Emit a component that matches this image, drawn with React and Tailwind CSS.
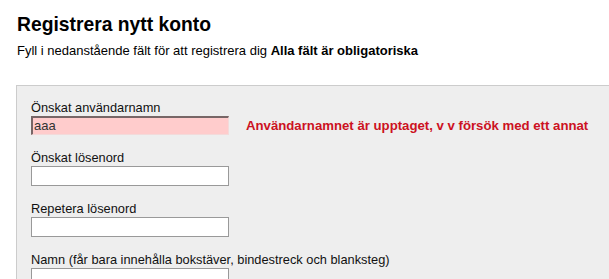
export default function App() {
  const font = { fontFamily: '"Liberation Sans", Arial, sans-serif' };
  return (
    <div className="min-h-[279px] bg-white pt-[13px] text-black overflow-hidden" style={font}>
      <div className="pl-[17px]">
        <h1 className="text-[19.3px] font-bold leading-[24px]">Registrera nytt konto</h1>
        <p className="text-[13px] leading-[16px] mt-[6px]">
          Fyll i nedanstående fält för att registrera dig <b>Alla fält är obligatoriska</b>
        </p>
      </div>
      <div className="ml-[16px] mt-[26px] border-t border-l border-[#cccccc] bg-[#eeeeee] pt-[14px] pl-[14px] pb-[20px]">
        <div className="mb-[15px]">
          <div className="text-[12.8px] leading-[16px] text-[#111]">Önskat användarnamn</div>
          <div className="flex items-center">
            <div className="w-[198px] h-[19px] bg-[#ffcccc] border-t-2 border-l-2 border-r border-b border-t-[#776666] border-l-[#776666] border-r-[#f3dada] border-b-[#f3dada] text-[13px] leading-[15px] text-[#333] pl-[1px]">aaa</div>
            <div className="ml-[17px] text-[13.2px] font-bold text-[#cc1122] leading-[16px] whitespace-nowrap">
              Användarnamnet är upptaget, v v försök med ett annat
            </div>
          </div>
        </div>
        <div className="mb-[15px]">
          <div className="text-[12.8px] leading-[16px] text-[#111]">Önskat lösenord</div>
          <div className="w-[198px] h-[20px] bg-white border border-[#999999]"></div>
        </div>
        <div className="mb-[15px]">
          <div className="text-[12.8px] leading-[16px] text-[#111]">Repetera lösenord</div>
          <div className="w-[198px] h-[20px] bg-white border border-[#999999]"></div>
        </div>
        <div className="mb-[15px]">
          <div className="text-[12.8px] leading-[16px] text-[#111]">Namn (får bara innehålla bokstäver, bindestreck och blanksteg)</div>
          <div className="w-[198px] h-[20px] bg-white border border-[#999999]"></div>
        </div>
      </div>
    </div>
  );
}
